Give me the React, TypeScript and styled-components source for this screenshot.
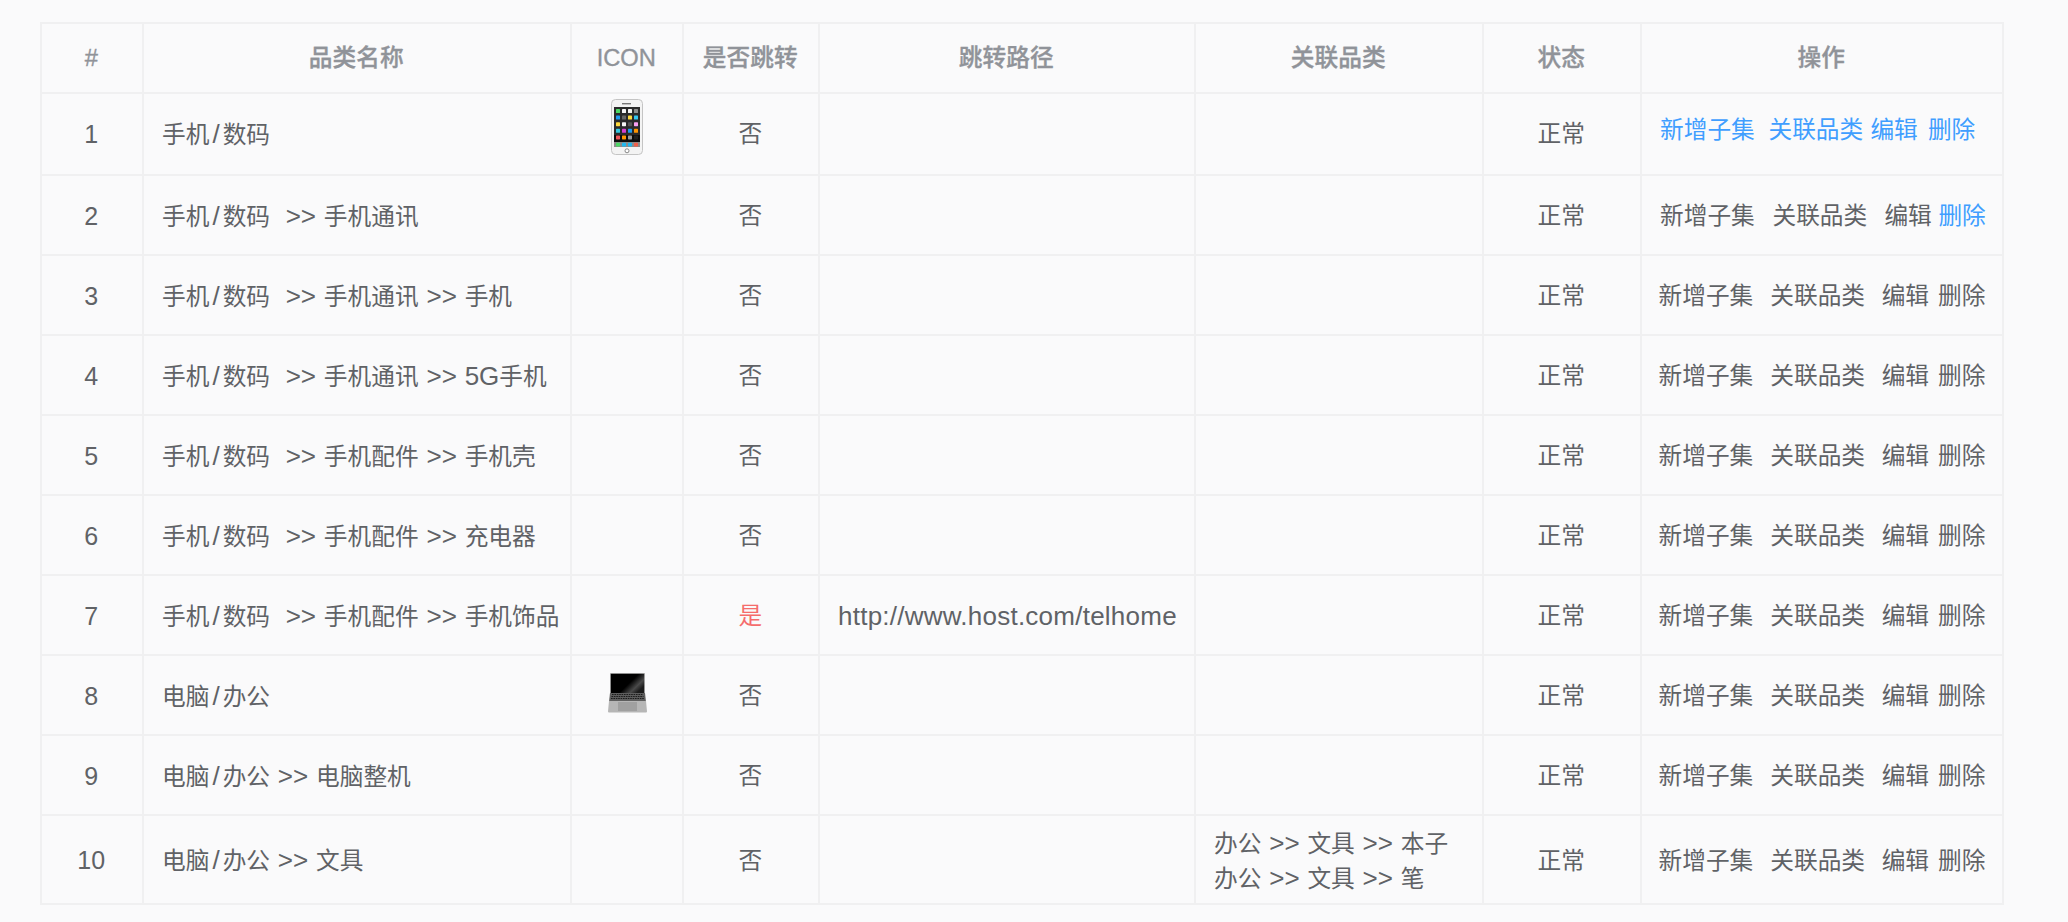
import React from "react";
import styled, { createGlobalStyle } from "styled-components";

const Global = createGlobalStyle`
  html, body { margin: 0; padding: 0; background: #fafafb; }
  body { font-family: "Liberation Sans", "Noto Sans CJK SC", sans-serif; font-size: 23.7px; color: #606266; }
`;

const Page = styled.div`
  padding: 22px 0 0 40px;
  height: 900px;
  overflow: hidden;
`;

const Table = styled.table`
  table-layout: fixed;
  width: 1964px;
  border-collapse: collapse;
  font-size: 23.7px;
  line-height: 34px;
`;

const Col = styled.col<{ $w: number }>`
  width: ${(p) => p.$w}px;
`;

const Row = styled.tr<{ $h: number; $flat?: boolean }>`
  height: ${(p) => p.$h}px;
  ${(p) => (p.$flat ? "& > td { padding-top: 0; }" : "")}
`;

const HeadCell = styled.th`
  border: 2px solid #f0f0f1;
  padding: 0 1.5px 0 0;
  text-align: center;
  font-size: 23.7px;
  font-weight: 500;
  color: #909399;
  -webkit-text-stroke: 0.35px #909399;
`;

const Cell = styled.td<{ $center?: boolean }>`
  border: 2px solid #f0f0f1;
  padding: ${(p) => (p.$center ? "2px 1.5px 0 0" : "2px 0 0 18px")};
  text-align: ${(p) => (p.$center ? "center" : "left")};
  color: #606266;
  white-space: nowrap;
`;

const IconCell = styled.td`
  border: 2px solid #f0f0f1;
  padding: 0;
`;

const IconWrap = styled.div<{ $up: number }>`
  display: flex;
  justify-content: center;
  margin-top: ${(p) => -p.$up}px;
`;

const Jump = styled.span<{ $yes: boolean }>`
  color: ${(p) => (p.$yes ? "#f56c6c" : "#606266")};
`;

const Latin = styled.span`
  font-size: 26px;
  word-spacing: 0.6px;
  white-space: pre;
`;

const Slash = styled.span`
  font-size: 26px;
  padding: 0 3px;
`;

const IdText = styled.span`
  font-size: 25px;
`;

const Url = styled.span`
  font-size: 26px;
  letter-spacing: 0.24px;
`;

const Ops = styled.div<{ $shift: number; $lift: number }>`
  display: flex;
  margin-left: ${(p) => p.$shift}px;
  margin-top: ${(p) => -p.$lift}px;
`;

const OpLink = styled.a<{ $active: boolean; $gap: number }>`
  color: ${(p) => (p.$active ? "#409eff" : "#606266")};
  margin-left: ${(p) => p.$gap}px;
  text-decoration: none;
`;

const Mixed = ({ text }: { text: string }) => (
  <>
    {text.split(/([\u4e00-\u9fff]+|\/)/).map((part, i) => {
      if (!part) return null;
      if (part === "/") return <Slash key={i}>/</Slash>;
      if (/[\u4e00-\u9fff]/.test(part)) return <React.Fragment key={i}>{part}</React.Fragment>;
      return <Latin key={i}>{part}</Latin>;
    })}
  </>
);

const PhoneIcon = () => (
  <svg width="32" height="56" viewBox="0 0 32 56">
    <rect x="0.5" y="0.5" width="31" height="55" rx="4" fill="#f3f3f3" stroke="#c4c4c4" />
    <rect x="11" y="4" width="9" height="1.4" fill="#777" />
    <rect x="3" y="8" width="26" height="40" fill="#2a2a2a" />
    <rect x="3" y="36" width="26" height="7" fill="#0c0c0c" />
    <rect x="3" y="43" width="26" height="5" fill="#8c8c8c" />
    {[
      ["#4cd964", "#f5f5f5", "#f5f5f5", "#8e8e8e"],
      ["#1e9bf0", "#666", "#ffd93b", "#35c7f0"],
      ["#ffd93b", "#f5f5f5", "#555", "#f8a0f0"],
      ["#35c7e0", "#d63fd0", "#1e9bf0", "#ff9500"],
      ["#f0565a", "#ff9500", "#9a9a9a", "#222"],
    ].map((r, i) =>
      r.map((c, j) => <rect key={`${i}-${j}`} x={5 + j * 6} y={10 + i * 6.6} width="4" height="4" rx="0.6" fill={c} />)
    )}
    {["#4cd964", "#1fb8f0", "#1fb8f0", "#f0604a"].map((c, j) => (
      <rect key={c + j} x={5 + j * 6} y={43.8} width="4" height="3.6" rx="0.6" fill={c} />
    ))}
    <circle cx="16" cy="51.8" r="2" fill="#fff" stroke="#888" />
  </svg>
);

const LaptopIcon = () => (
  <svg width="39" height="40" viewBox="0 0 39 40">
    <defs>
      <linearGradient id="glare" x1="0" y1="0" x2="1" y2="0.6">
        <stop offset="0.62" stopColor="#000" />
        <stop offset="0.85" stopColor="#4a4a4a" />
        <stop offset="1" stopColor="#1c1c1c" />
      </linearGradient>
    </defs>
    <rect x="2.3" y="0.3" width="34.4" height="20" fill="url(#glare)" stroke="#bdbdbd" strokeWidth="0.6" />
    <path d="M2 20 H37 L38 29 H1 Z" fill="#5e5e5e" />
    <path d="M4 21.5 H35 M3.5 23.5 H35.5 M3 25.5 H36" stroke="#1c1c1c" strokeWidth="1" strokeDasharray="1.6 0.8" />
    <path d="M1 28 H38 L39 38.5 Q39 39.5 38 39.5 H1 Q0 39.5 0 38.5 Z" fill="#b6b6b6" />
    <rect x="10" y="29" width="19" height="9" fill="#a0a0a0" />
  </svg>
);

type Op = { gap: number; active: boolean };
const opNames = ["新增子集", "关联品类", "编辑", "删除"];

const ops = (gaps: number[], active: boolean[]): Op[] => gaps.map((gap, i) => ({ gap, active: active[i] }));
const normal = ops([0, 17, 16.6, 9], [false, false, false, false]);

type RowData = {
  h: number;
  id: number;
  name: string;
  icon?: "phone" | "laptop";
  jump?: boolean;
  url?: string;
  rel?: string[];
  shift: number;
  lift?: number;
  ops: Op[];
};

const rows: RowData[] = [
  { h: 82, id: 1, name: "手机/数码", icon: "phone", shift: 0, lift: 8, ops: ops([0, 13.7, 7.2, 10.1], [true, true, true, true]) },
  { h: 80, id: 2, name: "手机/数码  >> 手机通讯", shift: 0, ops: ops([0, 17.7, 17.2, 6.6], [false, false, false, true]) },
  { h: 80, id: 3, name: "手机/数码  >> 手机通讯 >> 手机", shift: -1.5, ops: normal },
  { h: 80, id: 4, name: "手机/数码  >> 手机通讯 >> 5G手机", shift: -1.5, ops: normal },
  { h: 80, id: 5, name: "手机/数码  >> 手机配件 >> 手机壳", shift: -1.5, ops: normal },
  { h: 80, id: 6, name: "手机/数码  >> 手机配件 >> 充电器", shift: -1.5, ops: normal },
  { h: 80, id: 7, name: "手机/数码  >> 手机配件 >> 手机饰品", jump: true, url: "http://www.host.com/telhome", shift: -1.5, ops: normal },
  { h: 80, id: 8, name: "电脑/办公", icon: "laptop", shift: -1.5, ops: normal },
  { h: 80, id: 9, name: "电脑/办公 >> 电脑整机", shift: -1.5, ops: normal },
  { h: 89, id: 10, name: "电脑/办公 >> 文具", rel: ["办公 >> 文具 >> 本子", "办公 >> 文具 >> 笔"], shift: -1.5, ops: normal },
];

const widths = [102, 428, 112, 136, 376, 288, 158, 362];
const heads = ["#", "品类名称", "ICON", "是否跳转", "跳转路径", "关联品类", "状态", "操作"];

export default function App() {
  return (
    <Page>
      <Global />
      <Table>
        <colgroup>
          {widths.map((w, i) => (
            <Col key={i} $w={w} />
          ))}
        </colgroup>
        <thead>
          <Row $h={70}>
            {heads.map((h) => (
              <HeadCell key={h}>{h}</HeadCell>
            ))}
          </Row>
        </thead>
        <tbody>
          {rows.map((r) => (
            <Row key={r.id} $h={r.h} $flat={r.id === 1}>
              <Cell $center>
                <IdText>{r.id}</IdText>
              </Cell>
              <Cell>
                <Mixed text={r.name} />
              </Cell>
              <IconCell>
                {r.icon === "phone" && (
                  <IconWrap $up={14}>
                    <PhoneIcon />
                  </IconWrap>
                )}
                {r.icon === "laptop" && (
                  <IconWrap $up={4}>
                    <LaptopIcon />
                  </IconWrap>
                )}
              </IconCell>
              <Cell $center>
                <Jump $yes={!!r.jump}>{r.jump ? "是" : "否"}</Jump>
              </Cell>
              <Cell>{r.url && <Url>{r.url}</Url>}</Cell>
              <Cell>
                {r.rel?.map((t) => (
                  <div key={t}>
                    <Mixed text={t} />
                  </div>
                ))}
              </Cell>
              <Cell $center>正常</Cell>
              <Cell>
                <Ops $shift={r.shift} $lift={r.lift ?? 0}>
                  {opNames.map((n, i) => (
                    <OpLink key={n} $active={r.ops[i].active} $gap={r.ops[i].gap}>
                      {n}
                    </OpLink>
                  ))}
                </Ops>
              </Cell>
            </Row>
          ))}
        </tbody>
      </Table>
    </Page>
  );
}
